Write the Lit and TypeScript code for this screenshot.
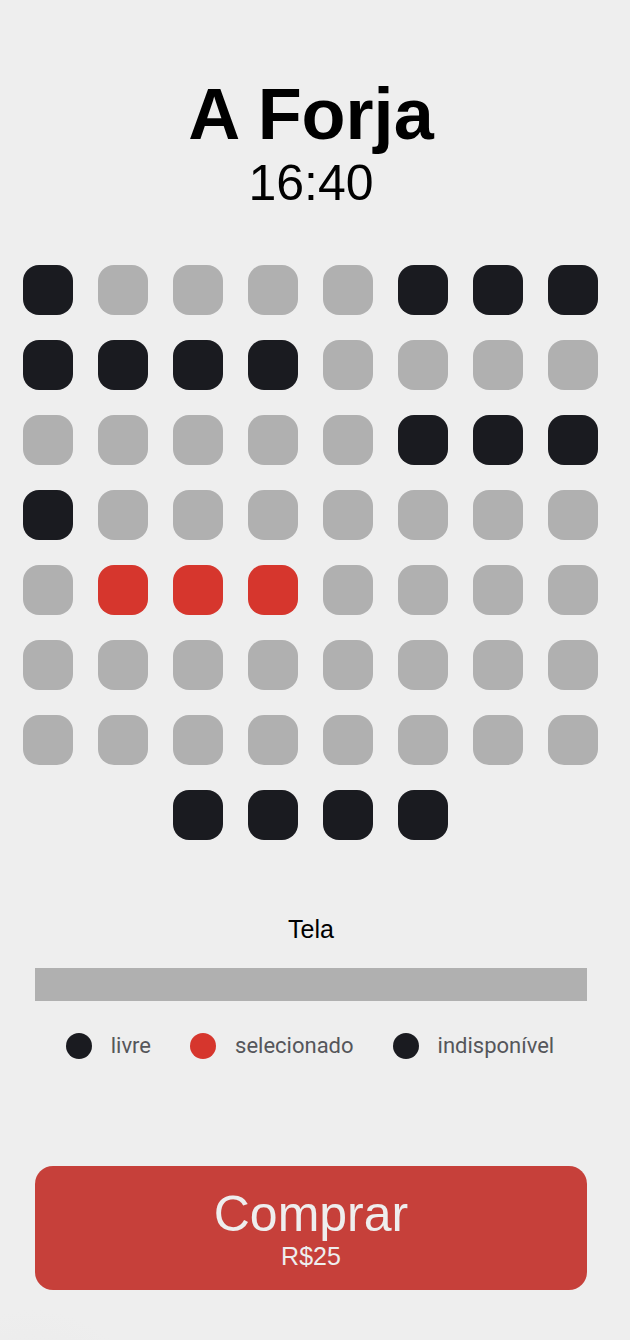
import { LitElement, html, css } from "lit";
import { customElement, property, state } from "lit/decorators.js";
import { classMap } from "lit/directives/class-map.js";

type SeatState = "free" | "taken" | "selected";

// x = taken, o = free, s = selected
const ROOM = [
  "xooooxxx",
  "xxxxoooo",
  "oooooxxx",
  "xooooooo",
  "osssoooo",
  "oooooooo",
  "oooooooo",
  "xxxx",
];

const STATES: Record<string, SeatState> = { x: "taken", o: "free", s: "selected" };

@customElement("seat-map")
export class SeatMap extends LitElement {
  static styles = css`
    :host {
      display: block;
    }
    .map {
      display: flex;
      flex-direction: column;
      gap: 25px;
    }
    .row {
      display: flex;
      justify-content: center;
      gap: 25px;
    }
    .seat {
      appearance: none;
      flex: 0 1 50px;
      min-width: 0;
      height: 50px;
      margin: 0;
      border-radius: 16px;
      background: #b0b0b0;
      cursor: pointer;
    }
    .seat.taken {
      background: #1a1b20;
      cursor: default;
    }
    .seat.selected {
      background: #d6362d;
    }
  `;

  @state() private rows: SeatState[][] = ROOM.map((row) =>
    [...row].map((c) => STATES[c])
  );

  private toggle(r: number, c: number) {
    this.rows = this.rows.map((row, i) =>
      row.map((seat, j) =>
        i === r && j === c ? (seat === "selected" ? "free" : "selected") : seat
      )
    );
  }

  render() {
    return html`<div class="map">
      ${this.rows.map(
        (row, r) => html`<div class="row">
          ${row.map(
            (seat, c) => html`<input
              type="checkbox"
              class=${classMap({ seat: true, [seat]: true })}
              aria-label=${`Fileira ${r + 1}, assento ${c + 1}`}
              .checked=${seat === "selected"}
              ?disabled=${seat === "taken"}
              @change=${() => this.toggle(r, c)}
            />`
          )}
        </div>`
      )}
    </div>`;
  }
}

@customElement("legend-item")
export class LegendItem extends LitElement {
  static styles = css`
    :host {
      display: flex;
      align-items: center;
      gap: 19px;
    }
    .dot {
      width: 26px;
      height: 26px;
      border-radius: 50%;
      background: #1a1b20;
    }
    .dot.red {
      background: #d6362d;
    }
    .label {
      font: 400 22px/26px Roboto, sans-serif;
      color: #55565a;
    }
  `;

  @property({ type: Boolean }) red = false;
  @property() label = "";

  render() {
    return html`<span class=${classMap({ dot: true, red: this.red })}></span>
      <span class="label">${this.label}</span>`;
  }
}

@customElement("app-root")
export class AppRoot extends LitElement {
  static styles = css`
    :host {
      display: block;
      box-sizing: border-box;
      min-height: 100vh;
      padding: 76px 8px 50px 0;
      background: radial-gradient(
          circle 120px at 32px calc(100% + 90px),
          #e9e9e9,
          #eeeeee
        )
        #eeeeee;
      color: #000;
      font-family: "Liberation Sans", Arial, sans-serif;
      text-align: center;
    }
    .title {
      margin: 0;
      font-size: 72px;
      line-height: 76px;
      font-weight: 700;
    }
    .time {
      margin: 0;
      font-size: 50px;
      line-height: 62px;
      font-weight: 300;
    }
    .seats {
      margin: 51px 24px 74px 22px;
    }
    .screen {
      margin: 0 35px;
    }
    .caption {
      margin: 0 0 24px;
      font-size: 25px;
      line-height: 30px;
    }
    .bar {
      height: 33px;
      background: #b0b0b0;
    }
    .legend {
      display: flex;
      flex-wrap: wrap;
      justify-content: center;
      gap: 16px 39px;
      margin: 32px 24px 107px 22px;
    }
    .actions {
      display: flex;
      margin: 0 35px;
    }
    .buy {
      flex: 1;
      display: flex;
      flex-direction: column;
      align-items: center;
      padding: 20px;
      border: 0;
      border-radius: 18px;
      background: #c6403a;
      color: #eeeeee;
      font-family: inherit;
      cursor: pointer;
    }
    .action {
      font-size: 50px;
      line-height: 56px;
    }
    .price {
      font-size: 25px;
      line-height: 28px;
    }
  `;

  render() {
    return html`
      <header>
        <h1 class="title">A Forja</h1>
        <p class="time">16:40</p>
      </header>
      <seat-map class="seats"></seat-map>
      <section class="screen">
        <p class="caption">Tela</p>
        <div class="bar"></div>
      </section>
      <div class="legend">
        <legend-item label="livre"></legend-item>
        <legend-item label="selecionado" red></legend-item>
        <legend-item label="indisponível"></legend-item>
      </div>
      <div class="actions">
        <button class="buy" type="button">
          <span class="action">Comprar</span>
          <span class="price">R$25</span>
        </button>
      </div>
    `;
  }
}
